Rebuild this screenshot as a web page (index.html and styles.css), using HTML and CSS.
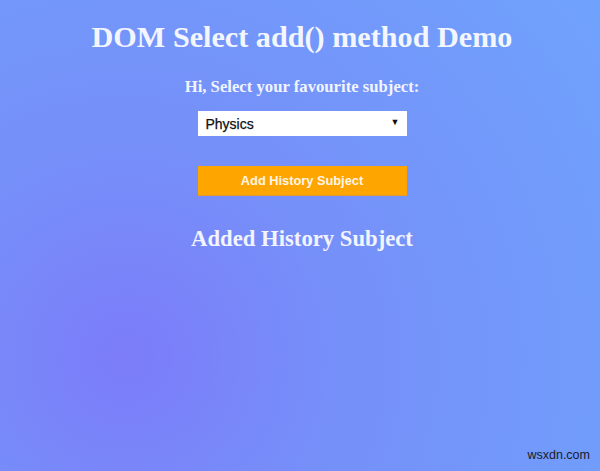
FILE: index.html
```html
<!DOCTYPE html>
<html>
<head>
<meta charset="utf-8">
<link rel="stylesheet" href="styles.css">
</head>
<body>
<div class="page">
  <h1 class="title">DOM Select add() method Demo</h1>
  <h3 class="prompt">Hi, Select your favourite subject:</h3>
  <div class="select">
    <span class="select-value">Physics</span>
    <span class="select-arrow">&#9660;</span>
  </div>
  <button class="add-btn">Add History Subject</button>
  <h2 class="result">Added History Subject</h2>
  <div class="watermark">wsxdn.com</div>
</div>
</body>
</html>
```

FILE: styles.css
```css
html, body {
  margin: 0;
  padding: 0;
  height: 100%;
}
body {
  background: radial-gradient(circle farthest-corner at 21% 76%, #7c7cf9 0%, #768ff9 35%, #6fa2fc 100%);
  font-family: "Liberation Serif", "Times New Roman", serif;
  color: #fff;
  overflow: hidden;
}
.page {
  position: relative;
  height: 471px;
  display: flex;
  flex-direction: column;
  align-items: center;
  padding-left: 4px;
  box-sizing: border-box;
}
.title {
  margin: 20px 0 0 0;
  font-size: 30.2px;
  line-height: 34px;
  font-weight: bold;
  color: #f4f6ff;
}
.prompt {
  margin: 23px 0 0 0;
  font-size: 16.7px;
  line-height: 20px;
  font-weight: bold;
  color: #f2f4ff;
}
.select {
  margin-top: 14px;
  width: 209px;
  height: 25px;
  box-sizing: border-box;
  background: #fff;
  display: flex;
  align-items: center;
  justify-content: space-between;
  padding: 0 7px 0 8px;
  font-family: "Liberation Sans", Arial, sans-serif;
  font-size: 14px;
  color: #111;
}
.select-value {
  -webkit-text-stroke: 0.25px #111;
}
.select-arrow {
  font-size: 9px;
  color: #111;
  margin-top: -3px;
}
.add-btn {
  margin-top: 30px;
  width: 209px;
  height: 30px;
  border: none;
  border-bottom: 1px solid #e09a30;
  background: #ffa500;
  color: #fff6e8;
  font-family: "Liberation Sans", Arial, sans-serif;
  font-weight: bold;
  font-size: 12.8px;
  padding: 0;
}
.result {
  margin: 30px 0 0 0;
  font-size: 22.7px;
  line-height: 26px;
  font-weight: bold;
  color: #f2f4ff;
}
.watermark {
  position: absolute;
  right: 10px;
  bottom: 9px;
  font-family: "Liberation Sans", Arial, sans-serif;
  font-size: 12.5px;
  color: #1a1a2a;
}
```
